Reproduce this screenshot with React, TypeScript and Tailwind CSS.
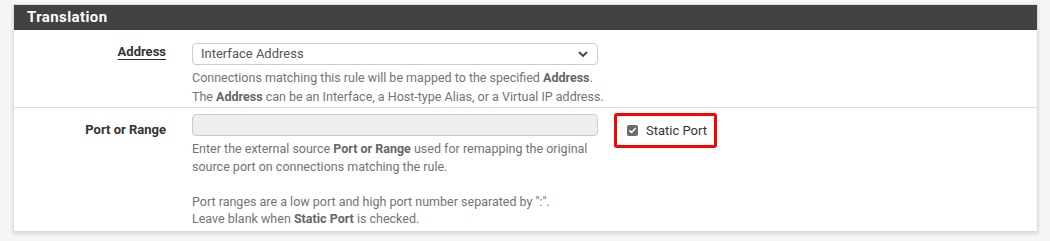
const font = { fontFamily: 'Roboto, "Noto Sans", sans-serif' };

const Check = () => (
  <span className="flex h-[11px] w-[11px] items-center justify-center rounded-[2px] bg-[#6b6b6b]">
    <svg viewBox="0 0 12 12" className="h-[9px] w-[9px]">
      <path d="M2.2 6.3 L4.8 8.8 L9.8 3.4" fill="none" stroke="#fff" strokeWidth="1.9" strokeLinecap="round" strokeLinejoin="round" />
    </svg>
  </span>
);

export default function App() {
  return (
    <div className="h-[241px] w-[1050px] overflow-hidden bg-[#f5f5f5] pt-[4px]" style={font}>
      <div className="ml-[13px] w-[1025px] border border-[#dcdcdc] bg-white shadow-[0_2px_4px_rgba(0,0,0,0.12)]">
        <div className="flex h-[25px] items-center bg-[#424242] pl-[13px] text-[15px] font-bold tracking-[0.4px] text-white">
          Translation
        </div>

        <div className="flex border-b border-[#dddddd] pt-[13px] pb-[1px]">
          <div className="w-[152px] text-right text-[13px] font-bold leading-[18px] text-[#333]">
            <span className="underline decoration-1 underline-offset-[3px]">Address</span>
          </div>
          <div className="ml-[26px] w-[406px]">
            <div className="flex h-[22px] items-center justify-between rounded-[4px] border border-[#cccccc] bg-white pl-[8px] pr-[9px] text-[13px] text-[#555]">
              <span>Interface Address</span>
              <svg viewBox="0 0 10 6" className="h-[6px] w-[10px]">
                <path d="M1 1 L5 5 L9 1" fill="none" stroke="#444" strokeWidth="1.8" />
              </svg>
            </div>
            <p className="mt-[3px] whitespace-nowrap text-[12.5px] leading-[19px] text-[#737373]">
              Connections matching this rule will be mapped to the specified <b className="text-[#666]">Address</b>.
              <br />
              The <b className="text-[#666]">Address</b> can be an Interface, a Host-type Alias, or a Virtual IP address.
            </p>
          </div>
        </div>

        <div className="flex pt-[6px] pb-[3px]">
          <div className="w-[152px] pt-[7px] text-right text-[13px] font-bold leading-[18px] text-[#333]">
            Port or Range
          </div>
          <div className="ml-[26px] w-[406px]">
            <div className="h-[22px] rounded-[4px] border border-[#cccccc] bg-[#eeeeee]" />
            <p className="mt-[4px] whitespace-nowrap text-[12.5px] leading-[17.5px] text-[#737373]">
              Enter the external source <b className="text-[#666]">Port or Range</b> used for remapping the original
              <br />
              source port on connections matching the rule.
              <br />
              <br />
              Port ranges are a low port and high port number separated by ":".
              <br />
              Leave blank when <b className="text-[#666]">Static Port</b> is checked.
            </p>
          </div>
          <div className="ml-[16px] -mt-[1px] flex h-[35px] w-[103px] items-center gap-[8px] self-start rounded-[3px] border-[3px] border-[#ff0000] pl-[10px]">
            <Check />
            <span className="text-[13px] text-[#333]">Static Port</span>
          </div>
        </div>
      </div>
      <div className="ml-[13px] mt-[9px] w-[1025px] border-t border-[#dcdcdc]" />
    </div>
  );
}
